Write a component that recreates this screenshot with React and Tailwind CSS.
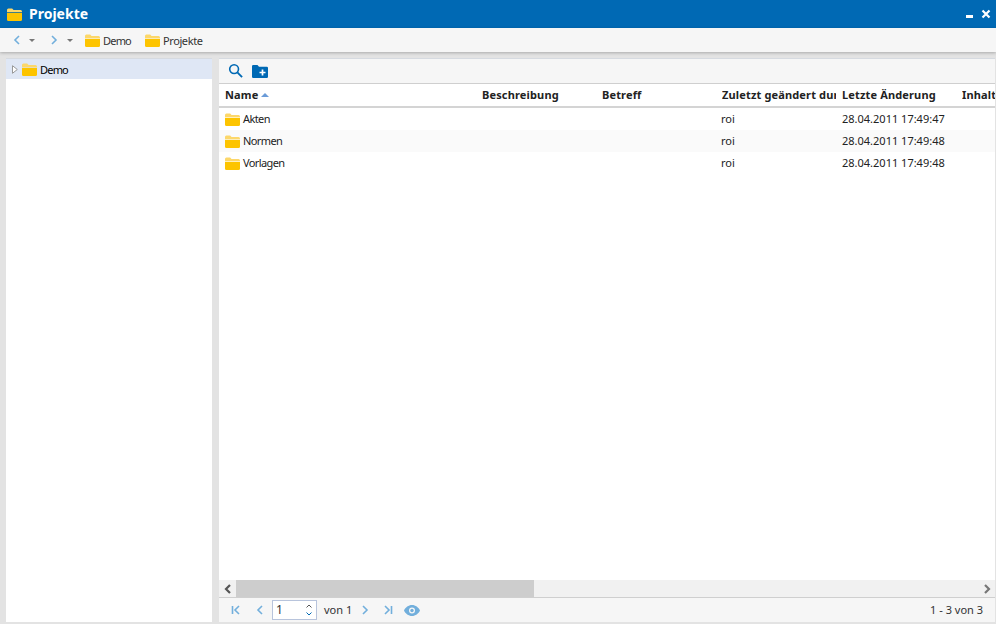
function Folder({ className = "w-[15px] h-[13px]" }) {
  return (
    <svg viewBox="0 0 16 13" preserveAspectRatio="none" className={className + " shrink-0"}>
      <path d="M0 2a1.500 1.500 0 0 1 1.500-1.500h4L7 2h7.500A1.500 1.500 0 0 1 16 3.500V4H0z" fill="#fcd76a" />
      <path d="M0 4.800h16V11.500a1.500 1.500 0 0 1-1.500 1.500h-13A1.500 1.500 0 0 1 0 11.500z" fill="#fdc400" />
    </svg>
  );
}
function Chev({ d, c = "#72afdc", s = 12, w = 1.6 }) {
  return (
    <svg viewBox="0 0 12 12" width={s} height={s} className="shrink-0">
      <path d={d} fill="none" stroke={c} strokeWidth={w} />
    </svg>
  );
}
const Caret = ({ className }) => <span className={"w-0 h-0 shrink-0 border-x-[3px] border-x-transparent border-t-[3px] border-t-[#777] " + className} />;
const cols = [
  ["Beschreibung", "w-[120px]"],
  ["Betreff", "w-[120px]"],
  ["Zuletzt geändert durch", "w-[120px]"],
  ["Letzte Änderung", "w-[120px]"],
  ["Inhalt", "w-[33px]"],
];
const rows = [
  ["Akten", "28.04.2011 17:49:47", "bg-white"],
  ["Normen", "28.04.2011 17:49:48", "bg-[#fafafa]"],
  ["Vorlagen", "28.04.2011 17:49:48", "bg-white"],
];
export default function App() {
  return (
    <div className="w-[996px] h-[624px] overflow-hidden flex flex-col bg-[#e3e3e3] text-[11px] text-[#222] font-['DejaVu_Sans',sans-serif]">
      <div className="h-[28px] shrink-0 bg-[#0069b4] flex items-center pl-[7px] pr-[5px]">
        <Folder className="w-[15px] h-[13px]" />
        <span className="ml-[7px] -mt-[1px] text-white font-bold text-[14px]">Projekte</span>
        <span className="ml-auto w-[7px] h-[3px] bg-white mt-[5px]" />
        <svg viewBox="0 0 10 10" className="w-[10px] h-[10px] ml-[8px]">
          <path d="M1.500 1.500l7 7M8.500 1.500l-7 7" stroke="#fff" strokeWidth="2.200" />
        </svg>
      </div>
      <div className="h-[24px] shrink-0 bg-[#f6f6f6] flex items-center pl-[11px] shadow-[0_1px_3px_rgba(0,0,0,0.25)] z-10">
        <Chev d="M8 2L4 6l4 4" />
        <Caret className="ml-[6px]" />
        <span className="ml-[13px] flex"><Chev d="M4 2l4 4-4 4" /></span>
        <Caret className="ml-[7px]" />
        <Folder className="ml-[12px] w-[15px] h-[13px]" />
        <span className="ml-[3px] mt-[2px] text-[#333] tracking-[-0.8px]">Demo</span>
        <Folder className="ml-[14px] w-[15px] h-[13px]" />
        <span className="ml-[3px] mt-[2px] text-[#333] tracking-[-0.4px]">Projekte</span>
      </div>
      <div className="flex-1 min-h-0 flex pt-[6px] pb-[2px] pl-[6px] pr-px gap-[7px]">
        <div className="w-[206px] shrink-0 bg-white border-t border-[#d6dae0]">
          <div className="h-[20px] bg-[#dfe7f5] flex items-center pl-[6px]">
            <svg viewBox="0 0 6 9" className="w-[6px] h-[9px] shrink-0">
              <path d="M.5.7L5.300 4.500.5 8.300z" fill="#fff" stroke="#999" />
            </svg>
            <Folder className="ml-[4px] w-[15px] h-[13px]" />
            <span className="ml-[3px] mt-[2px] text-black tracking-[-0.8px]">Demo</span>
          </div>
        </div>
        <div className="flex-1 min-w-0 flex flex-col bg-white border-t border-[#d6dae0]">
          <div className="h-[25px] shrink-0 bg-[#f6f6f6] border-b border-[#cfcfcf] flex items-center pl-[9px] gap-[9px]">
            <svg viewBox="0 0 16 16" className="w-[15px] h-[15px] -mt-[1px]">
              <circle cx="6.500" cy="6.500" r="4.700" fill="none" stroke="#0069b4" strokeWidth="1.700" />
              <path d="M10 10l5 5" stroke="#0069b4" strokeWidth="2" />
            </svg>
            <svg viewBox="0 0 16 13" className="w-[16px] h-[13px]">
              <path d="M0 1.200A1.200 1.200 0 0 1 1.200 0h4.300L7 1.700h7.800A1.200 1.200 0 0 1 16 2.900v8.900a1.200 1.200 0 0 1-1.200 1.200H1.200A1.200 1.200 0 0 1 0 11.800z" fill="#0069b4" />
              <path d="M10.500 4.500v6M7.500 7.500h6" stroke="#fff" strokeWidth="1.700" />
            </svg>
          </div>
          <div className="h-[24px] shrink-0 flex items-center border-b-2 border-[#d4d4d4] font-bold text-[#222] tracking-[0.15px] overflow-hidden whitespace-nowrap">
            <div className="w-[263px] shrink-0 pl-[6px] flex items-center gap-[3px]">
              Name
              <span className="w-0 h-0 border-x-[4px] border-x-transparent border-b-[4px] border-b-[#6a9bd8]" />
            </div>
            {cols.map(([t, w]) => (
              <div key={t} className={w + " shrink-0 pr-[6px] last:pr-0"}>
                <div className="overflow-hidden">{t}</div>
              </div>
            ))}
          </div>
          <div className="flex-1 min-h-0">
            {rows.map(([n, d, bg]) => (
              <div key={n} className={bg + " h-[22px] flex items-center"}>
                <div className="w-[263px] shrink-0 pl-[6px] flex items-center gap-[3px]">
                  <Folder />
                  <span className="tracking-[-0.6px]">{n}</span>
                </div>
                <div className="w-[239px] shrink-0" />
                <div className="w-[121px] shrink-0">roi</div>
                <div className="whitespace-nowrap">{d}</div>
              </div>
            ))}
          </div>
          <div className="h-[17px] shrink-0 bg-[#f1f1f1] flex items-center">
            <div className="w-[17px] flex justify-center"><Chev d="M8 2L4 6l4 4" c="#555" s={12} w={2.2} /></div>
            <div className="w-[298px] h-full bg-[#cdcdcd]" />
            <div className="ml-auto w-[17px] flex justify-center"><Chev d="M4 2l4 4-4 4" c="#777" s={12} w={2.2} /></div>
          </div>
          <div className="h-[25px] shrink-0 bg-[#f6f6f6] border-t border-[#cfcfcf] flex items-center pl-[11px] pr-[12px] text-[#333]">
            <Chev d="M2.500 2v8M9 2L5 6l4 4" />
            <span className="ml-[12px] flex"><Chev d="M8 2L4 6l4 4" /></span>
            <div className="ml-[6px] w-[45px] h-[20px] bg-white border border-[#b8c4dc] flex items-center justify-between pl-[3px] pr-[3px] text-[12px]">
              1
              <svg viewBox="0 0 8 14" className="w-[8px] h-[14px]">
                <path d="M1.500 4.500L4 2l2.500 2.500" fill="none" stroke="#555" />
                <path d="M1.500 9.500L4 12l2.500-2.500" fill="none" stroke="#0069b4" />
              </svg>
            </div>
            <span className="ml-[7px]">von 1</span>
            <span className="ml-[7px] flex"><Chev d="M4 2l4 4-4 4" /></span>
            <span className="ml-[11px] flex"><Chev d="M3 2l4 4-4 4M9.500 2v8" /></span>
            <svg viewBox="0 0 16 11" className="ml-[10px] w-[16px] h-[11px]">
              <path fillRule="evenodd" d="M8 0c3.600 0 6.500 2.400 8 5.500C14.500 8.600 11.600 11 8 11S1.500 8.600 0 5.500C1.500 2.400 4.400 0 8 0zm0 2.500a3 3 0 1 0 0 6 3 3 0 0 0 0-6z" fill="#72afdc" />
              <circle cx="8" cy="5.500" r="1.700" fill="#72afdc" />
            </svg>
            <span className="ml-auto">1 - 3 von 3</span>
          </div>
        </div>
      </div>
    </div>
  );
}
